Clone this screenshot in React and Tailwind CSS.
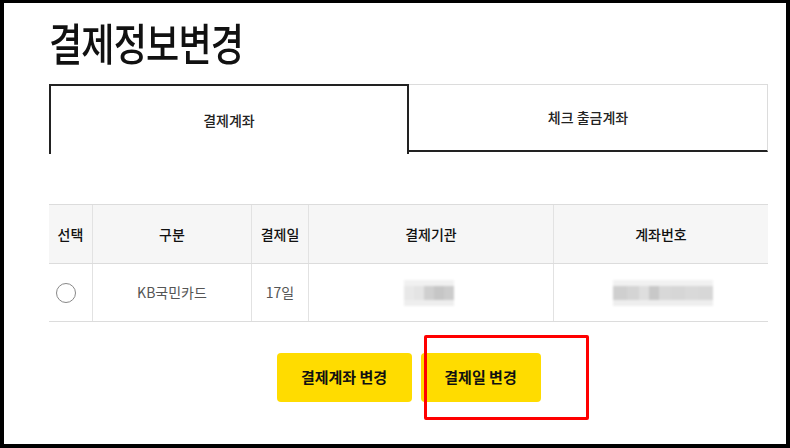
import React from "react";

const KR = { fontFamily: '"Noto Sans CJK KR", "Noto Sans", sans-serif' };

function Blur({ widths, colors }) {
  return (
    <div className="flex flex-col blur-[1.2px]">
      <div className="flex h-[6px]">
        {widths.map((w, i) => (
          <div key={i} className="h-full" style={{ width: w, background: "#f1f1f1" }} />
        ))}
      </div>
      <div className="flex h-[14px]">
        {widths.map((w, i) => (
          <div key={i} className="h-full" style={{ width: w, background: colors[i] }} />
        ))}
      </div>
      <div className="flex h-[6px]">
        {widths.map((w, i) => (
          <div key={i} className="h-full" style={{ width: w, background: "#eeeeee" }} />
        ))}
      </div>
    </div>
  );
}

export default function App() {
  return (
    <div
      className="relative w-[790px] h-[448px] overflow-hidden bg-white border-black border-t-[3px] border-l-4 border-r-4 border-b-4"
      style={KR}
    >
      <div className="pl-[45px] pr-[18px]">
        <div className="h-[81px] pt-[13px]">
          <h1 className="text-[44px] leading-[52px] font-medium text-[#111] origin-left scale-x-[0.82] whitespace-nowrap tracking-[-1px]">
            결제정보변경
          </h1>
        </div>

        <div className="flex h-[70px]">
          <div className="w-[360px] h-full border-2 border-b-0 border-[#222] flex items-center justify-center text-[14px] text-[#222] font-medium">
            결제계좌
          </div>
          <div className="flex-1 h-[68px] border-t border-r border-[#dcdcdc] border-b-2 border-b-[#222] flex items-center justify-center text-[14px] text-[#222] font-medium">
            체크 출금계좌
          </div>
        </div>

        <div className="mt-[50px] border-t border-[#dcdcdc]">
          <div className="grid grid-cols-[43px_159px_57px_245px_215px] h-[59px] bg-[#f6f6f6] border-b border-[#dcdcdc] text-[14px] font-medium text-[#111]">
            <div className="flex items-center justify-center">선택</div>
            <div className="flex items-center justify-center border-l border-[#e2e2e2]">구분</div>
            <div className="flex items-center justify-center border-l border-[#e2e2e2]">결제일</div>
            <div className="flex items-center justify-center border-l border-[#e2e2e2]">결제기관</div>
            <div className="flex items-center justify-center border-l border-[#e2e2e2]">계좌번호</div>
          </div>
          <div className="grid grid-cols-[43px_159px_57px_245px_215px] h-[58px] border-b border-[#dcdcdc] text-[14px] text-[#555]">
            <div className="flex items-center pl-[7px]">
              <div className="w-[20px] h-[20px] rounded-full border border-[#888] bg-white" />
            </div>
            <div className="flex items-center justify-center border-l border-[#e2e2e2]">KB국민카드</div>
            <div className="flex items-center justify-center border-l border-[#e2e2e2]">17일</div>
            <div className="flex items-center justify-center border-l border-[#e2e2e2]">
              <div className="ml-[-4px]">
                <Blur
                  widths={[10, 10, 10, 10, 10]}
                  colors={["#e8e8e8", "#e4e4e4", "#cfcfcf", "#c6c6c6", "#cccccc"]}
                />
              </div>
            </div>
            <div className="flex items-center justify-center border-l border-[#e2e2e2]">
              <div className="ml-[4px]">
                <Blur
                  widths={[14, 12, 10, 10, 12, 14, 14, 14]}
                  colors={["#cfcfcf", "#d4d4d4", "#dedede", "#c8c8c8", "#d8d8d8", "#d6d6d6", "#d9d9d9", "#d7d7d7"]}
                />
              </div>
            </div>
          </div>
        </div>

        <div className="mt-[31px] flex justify-center gap-[9px]">
          <button className="w-[135px] h-[49px] rounded-[4px] bg-[#ffdc00] text-[15px] font-bold text-[#111]">
            결제계좌 변경
          </button>
          <button className="w-[120px] h-[49px] rounded-[4px] bg-[#ffdc00] text-[15px] font-bold text-[#111]">
            결제일 변경
          </button>
        </div>
      </div>

      <div className="absolute left-[420px] top-[332px] w-[165px] h-[85px] border-[3px] border-[#ff0000] rounded-[2px]" />
    </div>
  );
}
